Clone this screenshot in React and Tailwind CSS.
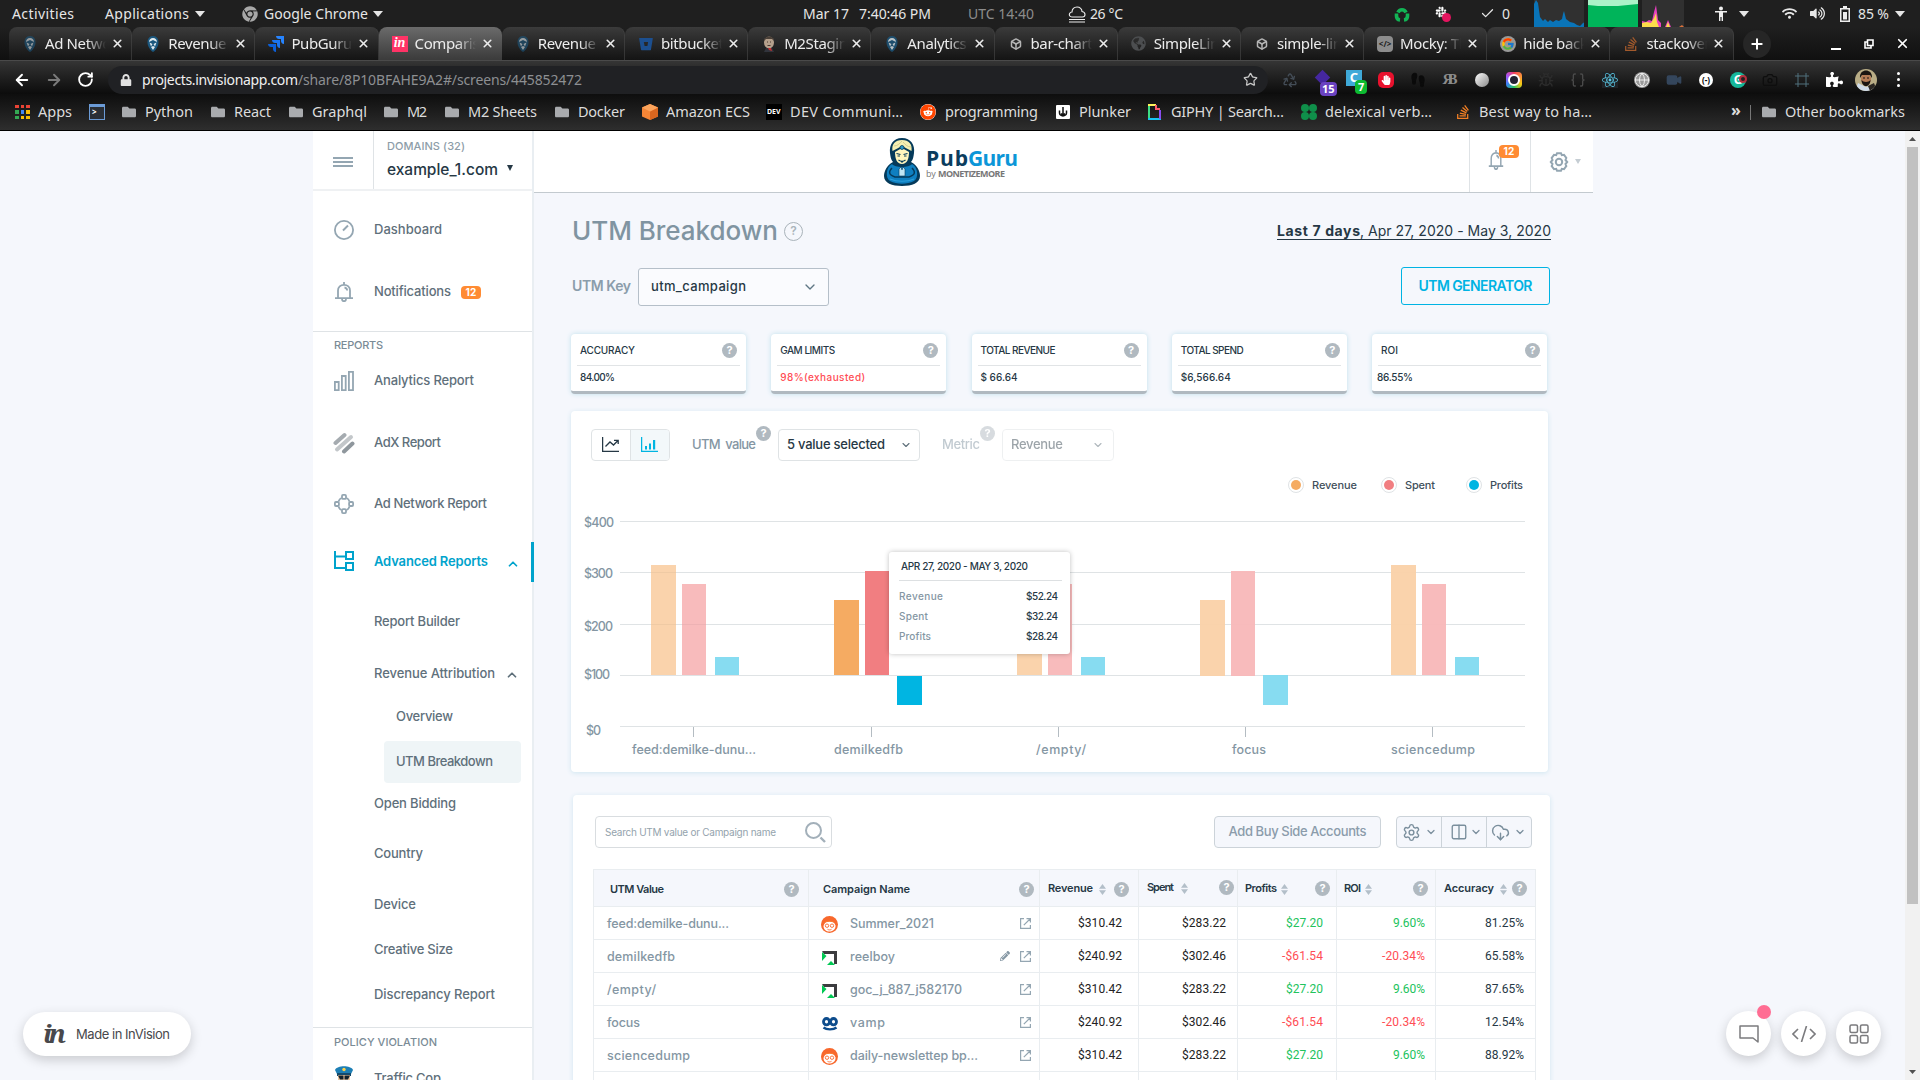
import React, { useLayoutEffect, useRef } from 'react';
import {
  Recycle, Footprints, Globe, Video, Camera, Braces, Star, Settings, CloudDownload, Columns2,
  ChevronDown, ChevronUp, Check, RotateCw, ArrowLeft, ArrowRight, X, Plus, Frame, Bug, Box,
} from 'lucide-react';
import {
  FaBitbucket, FaStackOverflow, FaReact, FaReddit, FaHandPaper, FaPuzzlePiece, FaLock, FaFolder,
  FaWifi, FaVolumeUp, FaSlack, FaGlobeAmericas, FaChrome, FaPencilAlt,
} from 'react-icons/fa';
import { FcGoogle } from 'react-icons/fc';

/* Text whose tracking is adjusted so that it fills a given width. */
function T({ w, className = '', children }) {
  const ref = useRef(null);
  useLayoutEffect(() => {
    const el = ref.current;
    el.style.letterSpacing = '0px';
    el.style.marginRight = '0px';
    const ls = (w - el.getBoundingClientRect().width) / Math.max(1, el.textContent.length - 1);
    el.style.letterSpacing = `${ls}px`;
    el.style.marginRight = `${-ls}px`;
  }, [w, children]);
  return <span ref={ref} className={`inline-block self-auto whitespace-pre ${className}`}>{children}</span>;
}

const Caret = ({ className = '', size = 'h-[6px] w-[10px]' }) => (
  <svg viewBox="0 0 10 6" preserveAspectRatio="none" className={`${size} ${className}`}><path d="M0 0h10L5 6z" fill="currentColor" /></svg>
);

function Help({ className = '' }) {
  return (
    <span className={`flex size-[15px] shrink-0 items-center justify-center rounded-full bg-[#b0b9c0] text-[11px] font-bold leading-none text-white ${className}`}>?</span>
  );
}

/* ---------- desktop bar ---------- */
function DesktopBar() {
  return (
    <div className="flex h-[27px] items-center bg-[#1f1f1f] text-[14px] text-[#e6e6e6] [&>*]:shrink-0">
      <T w={62} className="ml-3">Activities</T>
      <T w={84} className="ml-[31px]">Applications</T>
      <Caret className="ml-1.5" />
      <FaChrome className="ml-[37px] size-4 text-[#a8a8a8]" />
      <T w={104} className="ml-1.5">Google Chrome</T>
      <Caret className="ml-[5px]" />
      <T w={46} className="ml-[420px]">Mar 17</T>
      <T w={72} className="ml-2.5">7:40:46 PM</T>
      <T w={66} className="ml-[37px] text-[#8c8c8c]">UTC 14:40</T>
      <svg viewBox="0 0 18 18" className="ml-[34px] size-[18px]" fill="none" stroke="#eee" strokeWidth="1.1">
        <path d="M4 12C1.500 12 1 10 1.500 8.700 2 7.500 3 7 4 7 4 4 6 2 9 2s5 2 5 4.500c2 .3 3 1.500 3 3S16 12 14.500 12zM1 14.500h16M1 17h16" />
      </svg>
      <T w={33} className="ml-1">26 °C</T>
      <svg viewBox="0 0 16 16" className="ml-[271px] size-4" fill="none" stroke="#12b455" strokeWidth="3.600">
        <path d="M4 6.500A4.300 4.300 0 0 1 12 6.500" /><path d="M2.500 7.500v2.500a4 4 0 0 0 3.500 4" /><path d="M13.500 7.500v2.500a4 4 0 0 1-3.500 4" />
      </svg>
      <span className="relative ml-[25px] size-4">
        <FaSlack className="size-3 text-white" />
        <span className="absolute bottom-0 right-0 size-[9px] rounded-full bg-[#e5145f]" />
      </span>
      <Check className="ml-[29px] size-[15px]" strokeWidth={2} />
      <T w={8} className="ml-[7px]">0</T>
      <svg viewBox="0 0 50 27" className="ml-6 h-[27px] w-[50px] bg-[#303030]"><path d="M0 27V4L2 0 4 3l2 14 3 4 2-2 3 3 2-2 3 2 3-2 3 1 3-2 1-5 1-3 2 8 4 3 4 1 3 2 3 1 3-3 2-1v8z" fill="#0a74b8" /></svg>
      <svg viewBox="0 0 50 27" className="ml-1 h-[27px] w-[50px]"><path d="M0 0h50v27H0z" fill="#aaf2c8" /><path d="M0 5l10 1h20l20-2v23H0z" fill="#00b45a" /></svg>
      <svg viewBox="0 0 42 27" className="ml-1 h-[27px] w-[42px] bg-[#303030]">
        <path d="M0 27v-6l4 1 3-2 3 1 2-9 2-7 2 15 3 3v4zM23 27l3-7 3 7z" fill="#e83fc0" />
        <path d="M0 27v-4l5-1 4 1 3-5 2-5 1 9 2 5zM24 27l2-5 2 5z" fill="#fbdc4a" /><path d="M37 27l3-2 2 2z" fill="#d9703a" />
      </svg>
      <svg viewBox="0 0 16 16" className="ml-[29px] size-4" fill="#eee"><circle cx="8" cy="2.500" r="2" /><path d="M2 5h12v1.500H10V15H8.600v-4H7.400v4H6V6.500H2z" /></svg>
      <Caret className="ml-2.5" />
      <FaWifi className="ml-[33px] size-[15px]" />
      <FaVolumeUp className="ml-[13px] size-[15px]" />
      <svg viewBox="0 0 10 16" className="ml-[15px] h-4 w-2.5"><path d="M3 0h4v2h3v14H0V2h3z" fill="#eee" /><path d="M1.500 3.500h7v11h-7z" fill="#1f1f1f" /><path d="M3 6h4v7.500H3z" fill="#eee" /></svg>
      <T w={31} className="ml-2">85 %</T>
      <Caret className="ml-1.5" />
    </div>
  );
}

/* ---------- browser chrome ---------- */
const GuruFav = ({ className = '' }) => (
  <svg viewBox="0 0 16 16" className={`size-4 ${className}`}>
    <path d="M8 0C4 0 2.500 3 2.500 6.500S5 14 8 16c3-2 5.500-6 5.500-9.500S12 0 8 0z" fill="#1b577e" />
    <path d="M8 2C5.500 2 4 4 4 6l4-2 4 2c0-2-1.500-4-4-4zM4.500 6.500l3 1.500L6 10.500zM11.500 6.500l-3 1.500 1.500 2.500zM6 11l2 3 2-3-2-1z" fill="#dfe9ee" />
  </svg>
);
const InFav = () => <span className="flex size-4 items-center justify-center bg-[#ff3366] pb-0.5 font-['Liberation_Serif'] text-[14px] font-bold italic leading-none text-white">in</span>;
const Jira = () => (
  <svg viewBox="0 0 16 16" className="size-4">
    <path d="M8 0h8v8c-2 0-3-1.500-3-3V3h-2C9.500 3 8 2 8 0z" fill="#2684ff" />
    <path d="M4 4h8v8c-2 0-3-1.500-3-3V7H7C5.500 7 4 6 4 4z" fill="#1b74ee" />
    <path d="M0 8h8v8c-2 0-3-1.500-3-3v-2H3c-1.500 0-3-1-3-3z" fill="#0b5fd8" />
  </svg>
);
const Jenkins = () => (
  <svg viewBox="0 0 16 16" className="size-4"><ellipse cx="8" cy="6.500" rx="5" ry="6" fill="#b5a08c" /><path d="M3 5c0-6 10-6 10 0l-2-2H5z" fill="#4a4038" /><path d="M3 16l2-4h6l2 4z" fill="#31343c" /><path d="M7 12l3 0 1 3-3-1z" fill="#c43030" /><path d="M6 6h1M9 6h1M6.500 9.500h3" stroke="#4a3a30" /></svg>
);
const CodeFav = () => <span className="flex size-4 items-center justify-center rounded-sm bg-[#8d8d8d] text-[8px] font-bold leading-none text-[#222]">&lt;/&gt;</span>;

const tabs = [
  [<GuruFav className="opacity-60" />, 'Ad Network'],
  [<GuruFav />, 'Revenue R'],
  [<Jira />, 'PubGuru - '],
  [<InFav />, 'Comparison'],
  [<GuruFav className="opacity-60" />, 'Revenue R'],
  [<FaBitbucket className="size-3.5 text-[#1c4f8f]" />, 'bitbucket '],
  [<Jenkins />, 'M2Staging'],
  [<GuruFav className="opacity-80" />, 'Analytics '],
  [<Box className="size-3 text-[#b5b5b5]" strokeWidth={3} />, 'bar-chart'],
  [<FaGlobeAmericas className="size-[15px] text-[#4c4e50]" />, 'SimpleLine'],
  [<Box className="size-3 text-[#b5b5b5]" strokeWidth={3} />, 'simple-line'],
  [<CodeFav />, 'Mocky: Th'],
  [<span className="flex size-4 items-center justify-center rounded-full bg-[#999]"><FcGoogle className="size-3.5" /></span>, 'hide back'],
  [<FaStackOverflow className="size-4 text-[#a35a2c]" />, 'stackover'],
];

function TabStrip() {
  return (
    <div className="flex h-[33px] bg-gradient-to-b from-[#1f1f1f] to-[#101010] pl-[9px]">
      {tabs.map(([icon, label], i) => (
        <div
          key={i}
          className={`flex w-[123.200px] shrink-0 items-center rounded-t-lg pl-[13px] text-[15px] text-[#ececec] ${
            i === 3 ? 'bg-gradient-to-b from-[#6b6b6b] to-[#3b3b3b]' : 'border-r border-[#4a4a4a]/60 bg-gradient-to-b from-[#3b3b3b] to-[#141414]'
          }`}
        >
          <span className="flex size-4 items-center justify-center">{icon}</span>
          <span className="ml-[7px] w-[61px] overflow-hidden whitespace-pre tracking-tight [mask-image:linear-gradient(to_right,#000_68%,transparent)]">{label}</span>
          <X className="ml-[5px] size-[13px]" strokeWidth={3} />
        </div>
      ))}
      <span className="ml-[9px] mt-[3px] flex size-7 items-center justify-center rounded-full bg-[#262626] text-white"><Plus className="size-4" strokeWidth={3} /></span>
      <div className="ml-[60px] flex items-center text-white">
        <span className="mt-2.5 h-0.5 w-2.5 bg-white" />
        <svg viewBox="0 0 10 10" className="ml-[23px] size-2.5" fill="none" stroke="#fff" strokeWidth="1.600"><path d="M3.500 1h5.500v5.500H3.500zM3 3H1v6h6V7" /></svg>
        <X className="ml-[21px] size-[15px]" strokeWidth={2.800} />
      </div>
    </div>
  );
}

const Ext = ({ children }) => <span className="relative flex w-8 items-center justify-center">{children}</span>;

function Toolbar() {
  return (
    <div className="flex h-[34px] items-center border-t border-[#4a4a4a] bg-gradient-to-b from-[#353535] to-[#0c0c0c] pt-1 [&>*]:shrink-0">
      <ArrowLeft className="ml-[13px] size-[18px] text-white" strokeWidth={2.500} />
      <ArrowRight className="ml-3.5 size-[18px] text-[#7a7a7a]" strokeWidth={2.500} />
      <RotateCw className="ml-3.5 size-[17px] text-white" strokeWidth={2.600} />
      <div className="ml-[14px] flex h-7 w-[1160px] items-center rounded-full bg-[#202124] text-[14px]">
        <FaLock className="ml-3 size-3 text-[#e2e2e2]" />
        <T w={156} className="ml-2.5 text-[#f0f0f0]">projects.invisionapp.com</T>
        <T w={284} className="text-[#8d8f92]">/share/8P10BFAHE9A2#/screens/445852472</T>
        <Star className="ml-auto mr-2.5 size-[15px] text-[#c8c8c8]" strokeWidth={2} />
      </div>
      <div className="ml-[6px] flex h-6 items-center">
        <Ext><Recycle className="size-4 text-[#444d57]" /></Ext>
        <Ext><span className="mb-1 size-[11px] rotate-45 bg-[#4527a0]" /><span className="absolute left-[14px] top-[10px] rounded-sm bg-[#6a42c1] px-0.5 text-[11px] font-bold leading-[14px] text-white">15</span></Ext>
        <Ext><span className="mb-1 flex size-4 items-center justify-center bg-[#3fa9d8] text-[13px] font-bold leading-none text-white">C</span><span className="absolute left-[17px] top-[10px] rounded-sm bg-[#0dbb31] px-[3px] text-[11px] font-bold leading-[14px] text-white">7</span></Ext>
        <Ext><span className="flex size-4 items-center justify-center rounded-[5px] bg-[#e8112d]"><FaHandPaper className="size-2.5 text-white" /></span></Ext>
        <Ext><Footprints className="size-4 fill-[#0b0b0b] text-[#0b0b0b]" /></Ext>
        <Ext><T w={15} className="font-['Liberation_Serif'] text-[15px] font-bold leading-none text-[#8b8b8b]">ЯB</T></Ext>
        <Ext><span className="size-[14px] rounded-full bg-gradient-to-br from-white to-[#8a8a8a]" /></Ext>
        <Ext><span className="flex size-4 items-center justify-center rounded bg-[conic-gradient(#f43f5e,#fb923c,#facc15,#22c55e,#3b82f6,#a855f7,#f43f5e)]"><span className="size-3 rounded-full border-2 border-white bg-[#223]" /></span></Ext>
        <Ext><Bug className="size-4 text-[#2c2c2c]" /></Ext>
        <Ext><Braces className="size-4 text-[#4a4a4a]" /></Ext>
        <Ext><span className="bg-[#202327]"><FaReact className="size-4 text-[#61dafb]/90" /></span></Ext>
        <Ext><span className="rounded-full bg-[#9a9a9a]"><Globe className="size-4 text-[#eee]" strokeWidth={1.500} /></span></Ext>
        <Ext><Video className="size-4 fill-[#34465c] text-[#34465c]" /></Ext>
        <Ext><span className="flex size-3.5 items-center justify-center rounded-full bg-white text-[8px] font-bold leading-none text-black">(-)</span></Ext>
        <Ext><span className="flex size-4 items-center justify-center rounded-full bg-[#15b89a] text-[12px] font-bold leading-none text-white">G</span><span className="absolute right-[7px] top-[3px] size-2 rounded-full border-2 border-[#b3303e] bg-[#222]" /></Ext>
        <Ext><Camera className="size-4 text-[#0e0e0e]" /></Ext>
        <Ext><Frame className="size-4 text-[#50707c]" strokeWidth={1.500} /></Ext>
        <Ext><FaPuzzlePiece className="size-[17px] text-white" /></Ext>
        <Ext>
          <svg viewBox="0 0 22 22" className="size-[22px]"><clipPath id="av"><circle cx="11" cy="11" r="11" /></clipPath><g clipPath="url(#av)"><path d="M0 0h22v22H0z" fill="#b9ad86" /><path d="M0 22l3-8 8 4 6-2 4 6z" fill="#cfdbe8" /><path d="M13 17l6-3 3 8h-7z" fill="#2a2622" /><ellipse cx="11" cy="10" rx="5" ry="6.500" fill="#b27a55" /><path d="M5 9c-1-10 13-10 12 0l-2-3H7zM6.500 11c2 2.500 7 2.500 9 0-.5 8-8.500 8-9 0z" fill="#1a1512" /><path d="M8 9h2M12 9h2" stroke="#1a1512" /></g></svg>
        </Ext>
        <Ext><span className="flex flex-col gap-[3px]"><i className="size-[3px] rounded-full bg-white" /><i className="size-[3px] rounded-full bg-white" /><i className="size-[3px] rounded-full bg-white" /></span></Ext>
      </div>
    </div>
  );
}

const Folder = () => <FaFolder className="size-[14px] text-[#a9abae]" />;
const AppsGrid = () => (
  <span className="grid grid-cols-3 gap-[2px]">
    {['bg-[#ea4335]', 'bg-[#ea4335]', 'bg-[#ea4335]', 'bg-[#34a853]', 'bg-[#4285f4]', 'bg-[#fbbc05]', 'bg-[#34a853]', 'bg-[#fbbc05]', 'bg-[#fbbc05]'].map((c, i) => <i key={i} className={`size-[3.500px] ${c}`} />)}
  </span>
);
const Terminal = () => <span className="block size-4 border border-t-[3px] border-[#6b9bd6] bg-[#2a2f36] pl-0.5 text-[8px] font-bold leading-[9px] text-white">&gt;</span>;
const Cube = () => <svg viewBox="0 0 16 16" className="size-4"><path d="M8 0l8 3.500v9L8 16l-8-3.500v-9z" fill="#f58536" /><path d="M8 7.500l8-4v9L8 16z" fill="#d9661f" /><path d="M0 3.500L8 0l8 3.500-8 4z" fill="#fba45c" /></svg>;
const Giphy = () => <svg viewBox="0 0 13 16" className="h-4 w-[13px]" fill="none" strokeWidth="2"><path d="M1 1v14" stroke="#3ddc84" /><path d="M0 15h13" stroke="#18c5f5" /><path d="M12 15V6" stroke="#8a4cf0" /><path d="M0 1h8" stroke="#fff35c" /><path d="M8 1v4h4" stroke="#ff5c6c" /></svg>;
const Clover = () => <span className="grid grid-cols-2"><i className="size-2 rounded-full bg-[#0f8f4a]" /><i className="size-2 rounded-full bg-[#0f8f4a]" /><i className="size-2 rounded-full bg-[#0f8f4a]" /><i className="size-2 rounded-full bg-[#0f8f4a]" /></span>;
const Plunker = () => <svg viewBox="0 0 14 16" className="h-4 w-3.5"><rect y="1" width="14" height="14" rx="1" fill="#fff" /><path d="M7 3v8M3.500 6.500V9c0 1.500 1.500 3 3.500 3s3.500-1.500 3.500-3V6.500M5 9.500l2 2 2-2" fill="none" stroke="#111" strokeWidth="1.500" /></svg>;

const bookmarks = [
  [<AppsGrid />, 'Apps', 34, 'w-[74px]', 'w-[23px]'],
  [<Terminal />, '', 0, 'w-[33px]', 'w-4'],
  [<Folder />, 'Python', 48, 'w-[89px]', 'w-[23px]'],
  [<Folder />, 'React', 37, 'w-[78px]', 'w-[23px]'],
  [<Folder />, 'Graphql', 55, 'w-[95px]', 'w-[23px]'],
  [<Folder />, 'M2', 20, 'w-[61px]', 'w-[23px]'],
  [<Folder />, 'M2 Sheets', 69, 'w-[110px]', 'w-[23px]'],
  [<Folder />, 'Docker', 47, 'w-[87px]', 'w-[23px]'],
  [<Cube />, 'Amazon ECS', 84, 'w-[124px]', 'w-6'],
  [<span className="bg-black px-px text-[7px] font-bold leading-4 text-white">DEV</span>, 'DEV Communi…', 113, 'w-[154px]', 'w-6'],
  [<FaReddit className="size-4 rounded-full bg-white text-[#ff4500]" />, 'programming', 93, 'w-[136px]', 'w-[25px]'],
  [<Plunker />, 'Plunker', 52, 'w-[92px]', 'w-[23px]'],
  [<Giphy />, 'GIPHY | Search…', 113, 'w-[153px]', 'w-[23px]'],
  [<Clover />, 'delexical verb…', 107, 'w-[154px]', 'w-6'],
  [<FaStackOverflow className="size-4 text-[#f48024]" />, 'Best way to ha…', 113, 'w-[276px]', 'w-6'],
];

function Bookmarks() {
  return (
    <div className="flex h-[37px] items-center border-b border-black bg-gradient-to-b from-[#0e0e0e] to-[#2e2e2e] pl-[15px] text-[14.500px] text-[#dcdcdc] [&>*]:shrink-0">
      {bookmarks.map(([icon, label, w, width, iw], i) => (
        <div key={i} className={`flex items-center ${width}`}>
          <span className={`flex shrink-0 ${iw}`}>{icon}</span>
          {label && <T w={w}>{label}</T>}
        </div>
      ))}
      <span className="w-[19px] pb-1 text-[16px] font-bold leading-none">»</span>
      <span className="h-[15px] w-px bg-[#777]" />
      <span className="ml-[11px]"><Folder /></span>
      <T w={120} className="ml-[9px]">Other bookmarks</T>
    </div>
  );
}

/* ---------- sidebar ---------- */
const line = { fill: 'none', stroke: '#94a6b2', strokeWidth: 1.8 };
const Gauge = () => <svg viewBox="0 0 20 20" className="size-5" {...line}><circle cx="10" cy="10" r="9.100" /><path d="M9 10.500l5-5" strokeWidth="2" /></svg>;
const BellIcon = ({ className = 'size-5' }) => <svg viewBox="0 0 20 20" preserveAspectRatio="none" className={className} {...line}><path d="M1 16.200h18M4 16V8.500C4 5 6.500 2.800 10 2.800S16 5 16 8.500V16M10 0v3M8 17c0 3 4 3 4 0M10.500 5.500c1.500.2 2.500 1.200 2.700 3" /></svg>;
const BarsIcon = () => <svg viewBox="0 0 20 20" className="size-5" {...line}><path d="M.9 11h3.800v8.100H.9zM7.900 5h3.800v14.100H7.900zM14.900.9h4.100v18.200h-4.100z" /></svg>;
const AdxIcon = () => (
  <svg viewBox="0 0 22 22" className="-ml-px size-[22px]" strokeLinecap="round" strokeWidth="4">
    <path d="M2.500 11l9-8" stroke="#a5abb0" /><path d="M4 17.500L18 5" stroke="#c3c7ca" /><path d="M11 19.500l8.500-8" stroke="#8f979d" />
  </svg>
);
const NetIcon = () => <svg viewBox="0 0 20 20" className="size-5" {...line}><path d="M4.500 7.500C5 6 6 4.500 7.500 4M12.500 4c1.500.5 2.500 2 3 3.500M15.500 12.500c-.5 1.500-1.500 3-3 3.500M7.500 16c-1.500-.5-2.500-2-3-3.500" /><rect x="8" y=".9" width="4" height="4" rx="1" /><rect x="8" y="15.100" width="4" height="4" rx="1" /><rect x=".9" y="8" width="4" height="4" rx="1" /><rect x="15.100" y="8" width="4" height="4" rx="1" /></svg>;
const TreeIcon = () => <svg viewBox="0 0 20 20" className="size-5" fill="none" stroke="#00a3cc" strokeWidth="2"><path d="M1 0v17h10M1 5.500h10M12 1h7v7h-7zM12 12h7v7h-7z" /></svg>;

const item = 'flex h-5 shrink-0 items-center';
function Item({ icon, label, w, mt, sub, children }) {
  return (
    <div className={`${item} ${mt} pl-[21px]`}>
      <span className="w-10 shrink-0">{icon}</span>
      <T w={w} className={sub}>{label}</T>
      {children}
    </div>
  );
}

function Sidebar() {
  return (
    <aside className="flex w-[221px] shrink-0 flex-col border-r-2 border-[#e9eef2] bg-white text-[13px] font-medium text-[#5f707b]">
      <div className="flex h-[60px] shrink-0 border-b-2 border-[#eff1f3]">
        <div className="flex w-[61px] flex-col items-center justify-center gap-[2px] border-r border-[#dfe3e6] pt-[3px]">
          <i className="h-0.5 w-5 bg-[#94a6b2]" /><i className="h-0.5 w-5 bg-[#94a6b2]" /><i className="h-0.5 w-5 bg-[#94a6b2]" />
        </div>
        <div className="flex flex-col items-start pl-[13px] pt-[5px]">
          <T w={78} className="text-[11px] leading-5 text-[#8d9da8]">DOMAINS (32)</T>
          <div className="mt-[4px] flex items-center">
            <T w={111} className="text-[15.500px] leading-5 text-[#263845]">example_1.com</T>
            <Caret size="h-[6px] w-[6px]" className="mb-1 ml-[9px] text-[#263845]" />
          </div>
        </div>
      </div>
      <Item mt="mt-[29px]" icon={<Gauge />} label="Dashboard" w={68} />
      <Item mt="mt-[42px]" icon={<BellIcon />} label="Notifications" w={77}>
        <span className="ml-2.5 flex h-[13px] w-5 items-center justify-center rounded bg-[#ff8b33] text-[10px] font-bold tracking-wide text-white">12</span>
      </Item>
      <div className="mt-[29px] h-px shrink-0 bg-[#dfe3e6]" />
      <div className={`${item} mt-[3px] pl-[21px]`}><T w={49} className="text-[11px] text-[#7a8b96]">REPORTS</T></div>
      <Item mt="mt-[16px]" icon={<BarsIcon />} label="Analytics Report" w={100} />
      <Item mt="mt-[42px]" icon={<AdxIcon />} label="AdX Report" w={67} />
      <Item mt="mt-[41px]" icon={<NetIcon />} label="Ad Network Report" w={113} />
      <div className="-mr-0.5 mt-[28px] flex h-10 shrink-0 items-center border-r-[3px] border-[#00a3cc] pl-[21px] font-semibold text-[#00a3cc]">
        <span className="mb-[3px] w-10"><TreeIcon /></span>
        <T w={114}>Advanced Reports</T>
        <ChevronUp className="ml-[18px] mt-[3px] size-3.5" strokeWidth={3} />
      </div>
      <Item mt="mt-[30px]" label="Report Builder" w={86} />
      <Item mt="mt-[32px]" label="Revenue Attribution" w={121}><ChevronUp className="ml-[10px] mt-0.5 size-3.5" strokeWidth={3} /></Item>
      <Item mt="mt-[23px]" label="Overview" w={57} sub="ml-[22px]" />
      <div className="ml-[71px] mt-[14px] flex h-[42px] w-[137px] shrink-0 items-center rounded bg-[#eff5f7] pl-3"><T w={97}>UTM Breakdown</T></div>
      <Item mt="mt-[11px]" label="Open Bidding" w={82} />
      <Item mt="mt-[30px]" label="Country" w={49} />
      <Item mt="mt-[31px]" label="Device" w={42} />
      <Item mt="mt-[25px]" label="Creative Size" w={79} />
      <Item mt="mt-[25px]" label="Discrepancy Report" w={121} />
      <div className="mt-[22px] h-px shrink-0 bg-[#dfe3e6]" />
      <div className={`${item} mt-[4px] pl-[21px]`}><T w={103} className="text-[11px] text-[#7a8b96]">POLICY VIOLATION</T></div>
      <Item
        mt="mt-[17px]" label="Traffic Cop" w={67}
        icon={
          <svg viewBox="0 0 20 20" className="-mt-2 size-5"><path d="M1 5C3 0 17 0 19 5l-2 4H3z" fill="#1d7fb5" /><path d="M3 8h14v3H3z" fill="#134b6e" /><path d="M4 10h12v6l-6 4-6-4z" fill="#f1c9a0" /><path d="M4 10.500h5.500v4H6zM10.500 10.500H16l-2 4h-3.500z" fill="#12222d" /><circle cx="10" cy="4.500" r="1.700" fill="#ffd24a" /></svg>
        }
      />
    </aside>
  );
}

/* ---------- page header ---------- */
const Guru = () => (
  <svg viewBox="0 0 36 48" className="h-12 w-9">
    <path d="M18 0C9 0 5 7 6 15c.5 4 1 7 3 9C3 27 0 33 0 38c0 7 8 10 18 10s18-3 18-10c0-5-3-11-9-14 2-2 2.500-5 3-9C31 7 27 0 18 0z" fill="#053a5a" />
    <path d="M8.500 13C7.500 6 11 2 18 2s10.500 4 9.500 11L18 8z" fill="#f5f0b2" />
    <path d="M10 8c4 0 6-3 8-5M27 9c-4 0-6-3-8-5" stroke="#c9c48a" strokeWidth=".8" fill="none" />
    <path d="M11 14l7-4 7 4c0 7-2 12-7 12s-7-5-7-12z" fill="#fff6bd" /><circle cx="18" cy="9.500" r="2" fill="#2c9bc9" stroke="#053a5a" strokeWidth=".8" />
    <path d="M12.500 15.500l4 1M23.500 15.500l-4 1M13.500 18h2.500M20 18h2.500M14.500 22c2 1.500 5 1.500 7 0M17 24h2" stroke="#053a5a" strokeWidth="1.100" fill="none" />
    <path d="M8 26c-6 3-7 14-2 17 7 3.500 17 3.500 24 0 5-3 4-14-2-17-3 4-17 4-20 0z" fill="#0f7fc0" />
    <path d="M8 30c-4 4-3 7 3 9h14c6-2 7-5 3-9" stroke="#053a5a" strokeWidth="1.400" fill="none" /><path d="M6 41c7 3 17 3 24 0" stroke="#2b9fdc" strokeWidth="1.200" fill="none" /><path d="M15 38v-7l2-2 1 3 1-3 2 2v7z" fill="#bfe6f5" stroke="#053a5a" strokeWidth=".6" />
  </svg>
);
const Gear8 = ({ className }) => (
  <svg viewBox="0 0 20 20" className={className} {...line} strokeWidth={2}><path d="M8 1.200h4l.8 2 2.200-.4 2.300 3-.8 2.200 1.700 2-1.700 2 .8 2.200-2.300 3-2.200-.4-.8 2H8l-.8-2-2.200.4-2.300-3 .8-2.200-1.700-2 1.700-2-.8-2.200 2.300-3 2.200.4z" /><circle cx="10" cy="10" r="3.200" /></svg>
);

function Header() {
  return (
    <header className="flex h-[62px] shrink-0 border-b border-[#c3cacf] bg-white">
      <div className="flex flex-1 items-center pl-[350px] pt-px">
        <Guru />
        <div className="ml-[6px] flex flex-col font-['Open_Sans']">
          <span className="text-[21px] font-bold leading-[22px] text-[#0b3d5e]"><T w={42}>Pub</T><T w={50} className="text-[#0c96d8]">Guru</T></span>
          <span className="text-[9px] leading-[9px] text-[#777]"><T w={12}>by </T><T w={67} className="font-bold">MONETIZEMORE</T></span>
        </div>
      </div>
      <div className="relative w-[61px] border-l border-[#dfe3e6] pl-[18px] pt-[19px]">
        <BellIcon className="h-5 w-4" />
        <span className="absolute left-[29px] top-[14px] flex h-[13px] w-5 items-center justify-center rounded bg-[#ff8b33] text-[10px] font-bold tracking-wide text-white">12</span>
      </div>
      <div className="flex w-[63px] items-center border-l border-[#dfe3e6] pl-[18px]">
        <Gear8 className="size-5" /><Caret size="h-[5px] w-[6px]" className="ml-[6px] text-[#c5cdd3]" />
      </div>
    </header>
  );
}

/* ---------- metric cards ---------- */
const metrics = [
  ['ACCURACY', 55, '84.00%', 35, '', '', ''],
  ['GAM LIMITS', 55, '98%(exhausted)', 85, 'text-[#ff4d55]', '', '-mr-px'],
  ['TOTAL REVENUE', 75, '$ 66.64', 37, '', '', '-mr-px'],
  ['TOTAL SPEND', 63, '$6,566.64', 50, '', '', '-mr-0.5'],
  ['ROI', 17, '86.55%', 36, '', '-ml-1', '-mr-0.5'],
];
function Metrics() {
  return (
    <div className="mt-[28px] flex w-[976px] justify-between text-[10px] font-medium text-[#263845]">
      {metrics.map(([l, lw, v, vw, c, ml, mr]) => (
        <div key={l} className="h-[60px] w-[175px] rounded border-b-[3px] border-[#b0b9c0] bg-white pl-[6px] pr-[6px] shadow-[0_0_5px_#bfe0ec]">
          <div className="flex h-8 items-center justify-between border-b border-[#e1e4e6] pl-[3px] pr-[3px] pt-px">
            <T w={lw}>{l}</T><Help className={mr} />
          </div>
          <div className="flex h-[23px] items-center pl-[3px]"><T w={vw} className={`${c} ${ml}`}>{v}</T></div>
        </div>
      ))}
    </div>
  );
}

/* ---------- chart ---------- */
const O = '#f5ab62', P = '#f17e81', B = '#00b5e2';
const bars = [
  [651, 565, 25, 110, O, 0.53], [682, 584, 24, 91, P, 0.53], [715, 657, 24, 18, B, 0.47],
  [834, 600, 25, 75, O, 1], [865, 571, 24, 104, P, 1], [897, 676, 25, 29, B, 1],
  [1017, 565, 25, 110, O, 0.53], [1048, 584, 24, 91, P, 0.53], [1081, 657, 24, 18, B, 0.47],
  [1200, 600, 25, 76, O, 0.53], [1231, 571, 24, 105, P, 0.53], [1263, 675, 25, 30, B, 0.47],
  [1391, 565, 25, 110, O, 0.53], [1422, 584, 24, 91, P, 0.53], [1455, 657, 24, 18, B, 0.47],
];
const yAxis = [['$400', 584, 30, 521, 522], ['$300', 584, 29, 572, 573], ['$200', 584, 29, 624, 626], ['$100', 584, 26, 675, 674], ['$0', 586, 15, 726, 730]];
const xAxis = [[693, 'feed:demilke-dunu...', 632, 124], [871, 'demilkedfb', 834, 69], [1058, '/empty/', 1036, 50], [1245, 'focus', 1232, 34], [1432, 'sciencedump', 1391, 84]];

function Plot() {
  return (
    <svg viewBox="571 500 977 272" className="h-[272px] w-[977px]" fontSize="12.500" fontWeight="500">
      {yAxis.map(([l, x, w, y, ty]) => (
        <g key={l}>
          <rect x="620" y={y} width="905" height="1" fill="#dfe3e5" />
          <text x={x} y={ty + 4.5} textLength={w} fill="#8496a3">{l}</text>
        </g>
      ))}
      {bars.map(([x, y, w, h, c, o], i) => (
        <g key={i}>
          {o < 1 && <rect x={x} y={y} width={w} height={h} fill="#fff" fillOpacity={i === 1 || i === 0 ? 0.3 : 0.9} />}
          <rect x={x} y={y} width={w} height={h} fill={c} fillOpacity={o} />
        </g>
      ))}
      {xAxis.map(([t, l, x, w]) => (
        <g key={l}>
          <rect x={t} y="727" width="1" height="10" fill="#b4bcc2" />
          <text x={x} y="754" textLength={w} fill="#8496a3">{l}</text>
        </g>
      ))}
    </svg>
  );
}

function Tooltip() {
  return (
    <div className="absolute left-[318px] top-[141px] h-[102px] w-[181px] rounded-[3px] bg-white pl-2.5 pr-2 text-[10px] font-medium text-[#263845] shadow-[0_0_5px_rgba(0,0,0,0.25)]">
      <div className="flex h-[29px] items-center border-b border-[#dde0e2] pl-0.5 pt-px"><T w={127}>APR 27, 2020 - MAY 3, 2020</T></div>
      <div className="mt-[5px] pr-1 leading-5">
        {[['Revenue', 44, '$52.24'], ['Spent', 29, '$32.24'], ['Profits', 32, '$28.24']].map(([l, w, v]) => (
          <div key={l} className="flex justify-between"><T w={w} className="text-[#8496a3]">{l}</T><T w={32}>{v}</T></div>
        ))}
      </div>
    </div>
  );
}

function ChartCard() {
  const box = 'flex h-8 items-center rounded border border-[#dfe3e5]';
  return (
    <section className="relative mt-[17px] flex h-[361px] w-[977px] shrink-0 flex-col rounded bg-white shadow-[0_1px_5px_#cfe6f0]">
      <div className="flex items-center pl-5 pt-[15px] text-[13px] font-medium [&>*]:shrink-0">
        <div className={`${box} w-[79px] overflow-hidden`}>
          <span className="flex flex-1 items-center justify-center pr-0.5">
            <svg viewBox="0 0 17 15" className="h-[15px] w-[17px]" fill="none" stroke="#263845" strokeWidth="1.300"><path d="M.6 0v14.400H17M3.500 9.500L8 5l3.500 3L16 3.500M12 3.300h4.200V7" /></svg>
          </span>
          <span className="flex h-full flex-1 items-center justify-center border-l border-[#dfe3e5] bg-[#f3f8fa] pr-0.5">
            <svg viewBox="0 0 17 15" className="h-[15px] w-[17px]"><path d="M.6 0v14.400H17" fill="none" stroke={B} strokeWidth="1.300" /><path d="M4 9h2v3.500H4zM8 6.500h2v6H8zM12 3h2.200v9.500H12z" fill={B} /></svg>
          </span>
        </div>
        <T w={64} className="ml-[22px] text-[#8496a3]">UTM  value</T>
        <Help className="mb-[22px]" />
        <div className={`${box} ml-[7px] w-[142px] justify-between pl-2 pr-[7px]`}>
          <T w={98} className="text-[#263845]">5 value selected</T><ChevronDown className="size-3 text-[#5f707b]" strokeWidth={2.200} />
        </div>
        <div className="ml-[22px] flex items-center opacity-50">
          <T w={38} className="text-[#8496a3]">Metric</T>
          <Help className="mb-[22px]" />
          <div className={`${box} ml-[7px] w-[112px] justify-between pl-2 pr-[9px]`}>
            <T w={52} className="text-[#3c4b56]">Revenue</T><ChevronDown className="size-3 text-[#5f707b]" strokeWidth={2.200} />
          </div>
        </div>
      </div>
      <div className="mt-[12px] flex h-[20px] items-center pl-[717px] text-[11px] font-medium text-[#3f4f5b]">
        {[['Revenue', 45, 'bg-[#f5ab62]', 'ml-0'], ['Spent', 30, 'bg-[#f17e81]', 'ml-6'], ['Profits', 33, 'bg-[#00b5e2]', 'ml-[31px]']].map(([l, w, c, ml]) => (
          <span key={l} className={`flex items-center ${ml}`}>
            <span className="flex size-4 items-center justify-center rounded-full border border-[#dfe3e5]"><i className={`size-2.5 rounded-full ${c}`} /></span>
            <T w={w} className="ml-2">{l}</T>
          </span>
        ))}
      </div>
      <div className="mt-auto"><Plot /></div>
      <Tooltip />
    </section>
  );
}

/* ---------- table ---------- */
const Sort = ({ className = '' }) => <svg viewBox="0 0 7 11" className={`h-[11px] w-[7px] shrink-0 ${className}`} fill="#b3bfc9"><path d="M3.500 0L7 4.700H0zM3.500 11L7 6.300H0z" /></svg>;
const External = () => <svg viewBox="0 0 11 11" className="size-[11px] shrink-0" fill="none" stroke="#94a6b2" strokeWidth="1.200"><path d="M4 .6H.6v9.800h9.800V7M6.500.6h3.900v3.900M3.800 7.200L10 1" /></svg>;
const Outbrain = () => <svg viewBox="0 0 17 17" className="size-[17px]"><circle cx="8.500" cy="8.500" r="8.500" fill="#f8682c" /><path d="M2.500 10a6.300 6.300 0 0 1 12-.500c.3 3.500-2.500 6-6 6s-6-2-6-5.500z" fill="#fff" /><path d="M2.500 8c2-3 10-3 12 0L12 5H5z" fill="#f97a2f" /><g fill="none" stroke="#f8682c" strokeWidth=".9"><circle cx="6" cy="9.700" r="1.700" /><circle cx="11" cy="9.700" r="1.700" /><path d="M6.500 13.300c1.500.8 2.500.8 4 0" /></g></svg>;
const Quora = () => <svg viewBox="0 0 15 14" className="ml-px h-3.5 w-[15px]"><path d="M0 0h15v13h-3V3H2z" fill="#3c3c3f" /><path d="M0 1l4.500 4L0 10zM5 14l4-4 4 4z" fill="#00c853" /></svg>;
const Vamp = () => <svg viewBox="0 0 16 14" className="ml-px h-3.5 w-4" fill="none" stroke="#0d4c8c" strokeWidth="2.800"><ellipse cx="4.500" cy="4.700" rx="3" ry="3.200" /><ellipse cx="11.500" cy="4.700" rx="3" ry="3.200" /><path d="M1.500 10.500c3 2.500 10 2.500 13 0" strokeWidth="2.400" /></svg>;

const rows = [
  ['feed:demilke-dunu...', 122, <Outbrain />, 'Summer_2021', 84, 0, 1, '81.25%'],
  ['demilkedfb', 68, <Quora />, 'reelboy', 45, 1, 0, '65.58%'],
  ['/empty/', 49, <Quora />, 'goc_j_887_j582170', 112, 0, 1, '87.65%'],
  ['focus', 33, <Vamp />, 'vamp', 35, 0, 0, '12.54%'],
  ['sciencedump', 83, <Outbrain />, 'daily-newslettep bp...', 128, 0, 1, '88.92%'],
];
const cols = 'grid grid-cols-[215px_231px_99px_99px_99px_99px_100px]';
const cell = 'flex items-center border-r border-b border-[#e9edf0]';
const num = "justify-end font-['Roboto'] text-[12px] font-normal";

function TableCard() {
  return (
    <section className="ml-[2px] mt-[23px] h-[330px] w-[977px] shrink-0 overflow-hidden rounded bg-white shadow-[0_1px_5px_#cfe6f0]">
      <div className="flex pl-[22px] pt-[21px] font-medium [&>*]:shrink-0">
        <div className="flex h-8 w-[237px] items-center rounded border border-[#d9dde0] pl-[9px] text-[10px] text-[#94a3ad]">
          <T w={171} className="font-normal">Search UTM value or Campaign name</T>
          <svg viewBox="0 0 21 21" className="ml-[29px] size-[21px]" fill="none" stroke="#a3b0ba" strokeWidth="2"><circle cx="8.500" cy="8.500" r="7.500" /><path d="M15.500 15.500l4.500 4.500" strokeWidth="2.400" /></svg>
        </div>
        <div className="ml-[382px] flex h-8 w-[167px] items-center justify-center rounded border border-[#ccd3d9] bg-[#f5f7fc] text-[13px] text-[#8b9cab]"><T w={138}>Add Buy Side Accounts</T></div>
        <div className="ml-[15px] flex h-8 w-[136px] rounded border border-[#ccd3d9] bg-[#f5f7fc] text-[#7b8f9d]">
          <span className="flex w-[44px] items-center gap-1 pl-[5px]"><Settings className="size-[19px]" strokeWidth={1.800} /><ChevronDown className="size-3" strokeWidth={2.500} /></span>
          <span className="flex w-[45px] items-center gap-[2px] border-l border-[#ccd3d9] pl-[8px]"><Columns2 className="size-[18px]" strokeWidth={1.800} /><ChevronDown className="size-3" strokeWidth={2.500} /></span>
          <span className="flex flex-1 items-center gap-1 border-l border-[#ccd3d9] pl-[4px]"><CloudDownload className="size-[19px]" strokeWidth={1.800} /><ChevronDown className="size-3" strokeWidth={2.500} /></span>
        </div>
      </div>
      <div className="ml-5 mt-[21px] w-[943px] border-l border-t border-[#e9edf0] text-[12.500px] font-medium text-[#8496a3]">
        <div className={`${cols} h-[37px] bg-[#f5f7fc] text-[11px] font-semibold text-[#263845]`}>
          <div className={`${cell} justify-between pl-[16px] pr-[9px] pt-[3px]`}><T w={54}>UTM Value</T><Help /></div>
          <div className={`${cell} justify-between pl-[14px] pr-[5px] pt-[3px]`}><T w={87}>Campaign Name</T><Help /></div>
          <div className={`${cell} pl-[8px] pt-px`}><T w={45}>Revenue</T><Sort className="ml-[6px] mt-0.5" /><Help className="ml-auto mr-[9px] mt-0.5" /></div>
          <div className={`${cell} pb-px pl-[8px]`}><T w={27}>Spent</T><Sort className="ml-[7px] mt-px" /><Help className="ml-auto mr-[3px]" /></div>
          <div className={`${cell} pl-[7px] pt-px`}><T w={32}>Profits</T><Sort className="ml-[4px] mt-px" /><Help className="ml-auto mr-[6px]" /></div>
          <div className={`${cell} pl-[7px] pt-px`}><T w={17}>ROI</T><Sort className="ml-[4px] mt-px" /><Help className="ml-auto mr-[7px]" /></div>
          <div className={`${cell} pl-[8px] pt-px`}><T w={50}>Accuracy</T><Sort className="ml-[6px] mt-px" /><Help className="ml-auto mr-[8px]" /></div>
        </div>
        {rows.map(([v, vw, icon, name, nw, edit, up, acc], i) => (
          <div key={i} className={`${cols} h-[33px]`}>
            <div className={`${cell} pl-[13px] pt-0.5`}><T w={vw}>{v}</T></div>
            <div className={`${cell} pl-[12px] pr-[8px] pt-[3px]`}>
              <span className="w-[29px] shrink-0">{icon}</span><T w={nw}>{name}</T>
              <span className="mb-[3px] ml-auto flex items-center gap-[10px]">{edit ? <FaPencilAlt className="size-[10px]" /> : null}<External /></span>
            </div>
            <div className={`${cell} ${num} pb-px pr-[16px] text-[#222]`}><T w={44}>{up ? '$310.42' : '$240.92'}</T></div>
            <div className={`${cell} ${num} pr-[11px] text-[#222]`}><T w={44}>{up ? '$283.22' : '$302.46'}</T></div>
            <div className={`${cell} ${num} pr-[13px] ${up ? 'text-[#22c35d]' : 'text-[#ff4d55]'}`}><T w={up ? 37 : 41}>{up ? '$27.20' : '-$61.54'}</T></div>
            <div className={`${cell} ${num} pr-[10px] ${up ? 'text-[#22c35d]' : 'text-[#ff4d55]'}`}><T w={up ? 32 : 43}>{up ? '9.60%' : '-20.34%'}</T></div>
            <div className={`${cell} ${num} pr-[11px] text-[#263845]`}><T w={39}>{acc}</T></div>
          </div>
        ))}
        <div className={`${cols} h-[33px]`}>{[0, 1, 2, 3, 4, 5, 6].map((i) => <div key={i} className={cell} />)}</div>
      </div>
    </section>
  );
}

/* ---------- floating controls ---------- */
function Floating() {
  const btn = 'relative flex size-[45px] items-center justify-center rounded-full bg-white shadow-[0_4px_12px_rgba(0,0,0,0.18)]';
  return (
    <>
      <div className="absolute bottom-[24px] left-[23px] flex h-11 w-[168px] items-center rounded-full bg-white pl-5 pt-0.5 text-[#48484c] shadow-[0_4px_12px_rgba(0,0,0,0.18)]">
        <T w={23} className="pb-1 font-['Noto_Serif','DejaVu_Serif','Liberation_Serif'] text-[26px] font-bold italic leading-none">in</T>
        <T w={94} className="ml-[10px] text-[13px]">Made in InVision</T>
      </div>
      <div className="absolute bottom-[24px] right-[39px] flex gap-[10px]">
        <span className={btn}>
          <svg viewBox="0 0 20 18" className="h-[18px] w-5" fill="none" stroke="#7b7b7e" strokeWidth="1.500"><path d="M1 1h18v16l-5-4H1z" strokeLinejoin="round" /></svg>
          <i className="absolute -top-[6px] right-0 size-3.5 rounded-full bg-[#ff6d93]" />
        </span>
        <span className={btn}><svg viewBox="0 0 24 16" className="h-4 w-6" fill="none" stroke="#7b7b7e" strokeWidth="1.600"><path d="M6 3L1 8l5 5M18 3l5 5-5 5M14.500 0l-5 16" /></svg></span>
        <span className={btn}><svg viewBox="0 0 20 20" className="size-5" fill="none" stroke="#7b7b7e" strokeWidth="1.500"><rect x="1" y="1" width="7.500" height="7.500" rx="1.500" /><rect x="11.500" y="1" width="7.500" height="7.500" rx="1.500" /><rect x="1" y="11.500" width="7.500" height="7.500" rx="1.500" /><rect x="11.500" y="11.500" width="7.500" height="7.500" rx="1.500" /></svg></span>
      </div>
    </>
  );
}

export default function App() {
  return (
    <div className="flex h-[1080px] w-[1920px] flex-col overflow-hidden bg-[#f5f7fc] font-['Inter',sans-serif]">
      <div className="shrink-0 font-['Noto_Sans',sans-serif]">
        <DesktopBar />
        <TabStrip />
        <Toolbar />
        <Bookmarks />
      </div>
      <div className="relative flex min-h-0 flex-1">
        <div className="ml-[313px] flex w-[1280px] overflow-hidden">
          <Sidebar />
          <main className="flex flex-1 flex-col">
            <Header />
            <div className="flex flex-col pl-[37px]">
              <div className="mt-[22px] flex h-8 w-[980px] items-center justify-between pl-px">
                <div className="flex items-center">
                  <T w={206} className="text-[26px] font-medium leading-8 text-[#8094a1]">UTM Breakdown</T>
                  <span className="ml-[6px] flex size-[19px] items-center justify-center rounded-full border-[1.500px] border-[#a9b3ba] text-[12px] font-semibold leading-none text-[#a9b3ba]">?</span>
                </div>
                <span className="flex pb-0.5 text-[14px] text-[#263845] underline underline-offset-[3px]"><T w={83} className="font-bold">Last 7 days</T><T w={191}>, Apr 27, 2020 - May 3, 2020</T></span>
              </div>
              <div className="mt-[20px] flex h-[39px] w-[979px] items-start">
                <T w={59} className="ml-px mt-2 text-[14px] font-semibold text-[#8b9dab]">UTM Key</T>
                <div className="ml-[7px] mt-px flex h-[38px] w-[191px] items-center justify-between rounded-[3px] border border-[#b5bfc9] bg-[#fafbfe] pl-3 pr-2.5 text-[13px] font-medium text-[#263845]">
                  <T w={95}>utm_campaign</T><ChevronDown className="size-4 text-[#5f7684]" strokeWidth={2} />
                </div>
                <div className="ml-auto flex h-[38px] w-[149px] items-center justify-center rounded-[3px] border border-[#00b3e3] pb-px text-[14px] font-semibold text-[#00b3e3]"><T w={114}>UTM GENERATOR</T></div>
              </div>
              <Metrics />
              <ChartCard />
              <TableCard />
            </div>
          </main>
        </div>
        <Floating />
        <div className="ml-auto flex w-[15px] flex-col items-center bg-[#f1f1f1]">
          <svg viewBox="0 0 7 4" className="mt-1.5 h-1 w-[7px] shrink-0"><path d="M3.500 0L7 4H0z" fill="#505050" /></svg>
          <span className="mt-1.5 h-[757px] w-[11px] shrink-0 bg-[#c1c1c1]" />
          <svg viewBox="0 0 7 4" className="mb-1.5 mt-auto h-1 w-[7px]"><path d="M0 0h7L3.500 4z" fill="#505050" /></svg>
        </div>
      </div>
    </div>
  );
}
